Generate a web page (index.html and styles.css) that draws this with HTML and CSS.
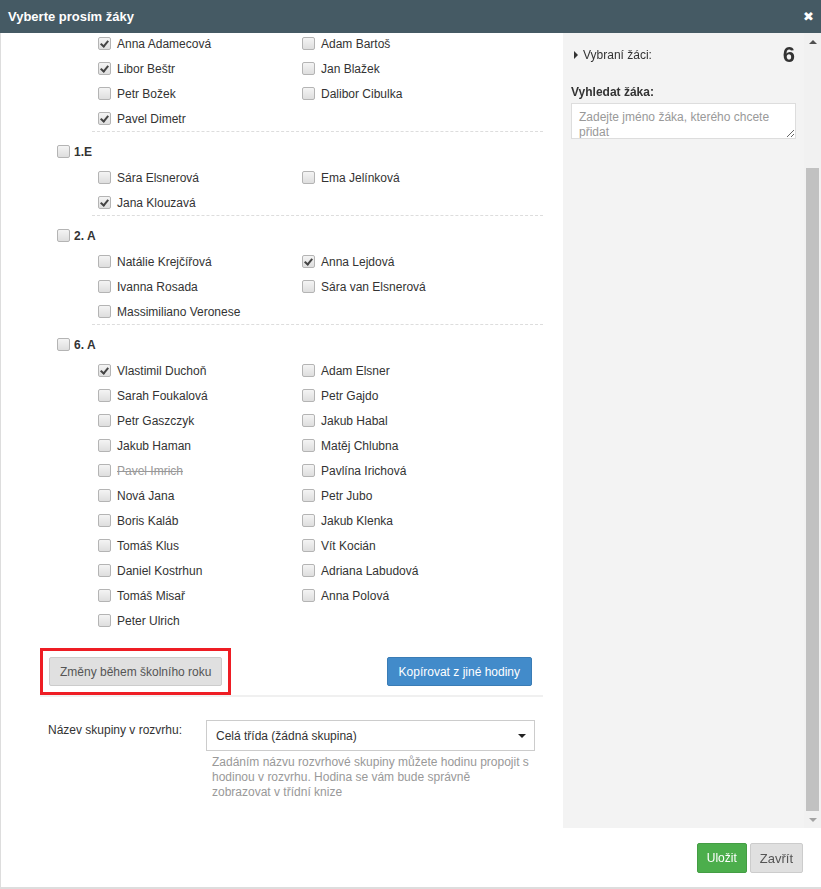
FILE: index.html
```html
<!DOCTYPE html>
<html lang="cs">
<head>
    <meta charset="UTF-8">
    <title>Vyberte prosím žáky</title>
    <link rel="stylesheet" href="styles.css">
</head>
<body>
<div class="dialog">
    <div class="dialog-header">
        <span class="title">Vyberte prosím žáky</span>
        <span class="close">&#10006;</span>
    </div>
    <div class="dialog-body">
        <div class="picker">
            <div class="groups">
                <div class="group">
                    <ul class="students">
                        <li><span class="cb checked"></span>Anna Adamecová</li>
                        <li><span class="cb"></span>Adam Bartoš</li>
                        <li><span class="cb checked"></span>Libor Beštr</li>
                        <li><span class="cb"></span>Jan Blažek</li>
                        <li><span class="cb"></span>Petr Božek</li>
                        <li><span class="cb"></span>Dalibor Cibulka</li>
                        <li><span class="cb checked"></span>Pavel Dimetr</li>
                    </ul>
                </div>
                <div class="group">
                    <div class="group-title"><span class="cb"></span>1.E</div>
                    <ul class="students">
                        <li><span class="cb"></span>Sára Elsnerová</li>
                        <li><span class="cb"></span>Ema Jelínková</li>
                        <li><span class="cb checked"></span>Jana Klouzavá</li>
                    </ul>
                </div>
                <div class="group">
                    <div class="group-title"><span class="cb"></span>2. A</div>
                    <ul class="students">
                        <li><span class="cb"></span>Natálie Krejčířová</li>
                        <li><span class="cb checked"></span>Anna Lejdová</li>
                        <li><span class="cb"></span>Ivanna Rosada</li>
                        <li><span class="cb"></span>Sára van Elsnerová</li>
                        <li><span class="cb"></span>Massimiliano Veronese</li>
                    </ul>
                </div>
                <div class="group last">
                    <div class="group-title"><span class="cb"></span>6. A</div>
                    <ul class="students">
                        <li><span class="cb checked"></span>Vlastimil Duchoň</li>
                        <li><span class="cb"></span>Adam Elsner</li>
                        <li><span class="cb"></span>Sarah Foukalová</li>
                        <li><span class="cb"></span>Petr Gajdo</li>
                        <li><span class="cb"></span>Petr Gaszczyk</li>
                        <li><span class="cb"></span>Jakub Habal</li>
                        <li><span class="cb"></span>Jakub Haman</li>
                        <li><span class="cb"></span>Matěj Chlubna</li>
                        <li class="left"><span class="cb"></span><s>Pavel Imrich</s></li>
                        <li><span class="cb"></span>Pavlína Irichová</li>
                        <li><span class="cb"></span>Nová Jana</li>
                        <li><span class="cb"></span>Petr Jubo</li>
                        <li><span class="cb"></span>Boris Kaláb</li>
                        <li><span class="cb"></span>Jakub Klenka</li>
                        <li><span class="cb"></span>Tomáš Klus</li>
                        <li><span class="cb"></span>Vít Kocián</li>
                        <li><span class="cb"></span>Daniel Kostrhun</li>
                        <li><span class="cb"></span>Adriana Labudová</li>
                        <li><span class="cb"></span>Tomáš Misař</li>
                        <li><span class="cb"></span>Anna Polová</li>
                        <li><span class="cb"></span>Peter Ulrich</li>
                    </ul>
                </div>
            </div>
            <div class="actions">
                <div class="highlight">
                    <button class="btn btn-default">Změny během školního roku</button>
                </div>
                <button class="btn btn-primary">Kopírovat z jiné hodiny</button>
            </div>
            <div class="form-row">
                <label class="form-label">Název skupiny v rozvrhu:</label>
                <div class="select">
                    <span>Celá třída (žádná skupina)</span>
                    <span class="caret"></span>
                </div>
                <p class="help">Zadáním názvu rozvrhové skupiny můžete hodinu propojit s hodinou v rozvrhu. Hodina se vám bude správně zobrazovat v třídní knize</p>
            </div>
        </div>
        <aside class="side">
            <div class="summary">
                <span class="toggle"><span class="arrow"></span>Vybraní žáci:</span>
                <span class="count">6</span>
            </div>
            <label class="side-label">Vyhledat žáka:</label>
            <div class="search">
                <textarea placeholder="Zadejte jméno žáka, kterého chcete přidat"></textarea>
            </div>
        </aside>
        <div class="scrollbar">
            <div class="sb-btn"><span class="sb-up"></span></div>
            <div class="sb-track"><div class="sb-thumb"></div></div>
            <div class="sb-btn"><span class="sb-down"></span></div>
        </div>
    </div>
    <div class="dialog-footer">
        <button class="btn btn-success">Uložit</button>
        <button class="btn btn-default">Zavřít</button>
    </div>
</div>
</body>
</html>
```

FILE: styles.css
```css
body {
    margin: 0;
    font-family: "Liberation Sans", Arial, sans-serif;
    font-size: 12px;
    color: #333;
    background: #fff;
}
.dialog {
    width: 821px;
    height: 889px;
    display: flex;
    flex-direction: column;
    overflow: hidden;
}
/* Header */
.dialog-header {
    height: 33px;
    flex: none;
    background: #455a64;
    color: #fff;
    display: flex;
    align-items: center;
    justify-content: space-between;
    padding: 0 7px 0 8px;
}
.title {
    font-weight: bold;
    font-size: 13px;
}
.close {
    font-family: "DejaVu Sans", sans-serif;
    font-size: 13px;
    font-weight: bold;
}
/* Body */
.dialog-body {
    height: 795px;
    flex: none;
    display: flex;
    border-left: 1px solid #ddd;
}
.picker {
    width: 562px;
    overflow: hidden;
}
.groups {
    margin-top: -2px;
    padding: 0 20px 0 56px;
}
.group-title {
    margin-top: 6px;
    height: 27px;
    display: flex;
    align-items: center;
    font-weight: bold;
}
.group-title .cb {
    margin-right: 4px;
}
.students {
    list-style: none;
    margin: 0 0 0 35px;
    padding: 0 0 0 6px;
    display: grid;
    grid-template-columns: 204px 1fr;
    border-bottom: 1px dashed #ddd;
}
.group.last .students {
    border-bottom: none;
}
.students li {
    height: 25px;
    display: flex;
    align-items: center;
}
.students li.left {
    color: #999;
}
.cb {
    width: 11px;
    height: 11px;
    border: 1px solid #b4b4b4;
    border-radius: 2px;
    background: linear-gradient(#f4f4f4, #dedede);
    margin-right: 6px;
    position: relative;
    flex: none;
}
.cb.checked::after {
    content: "";
    position: absolute;
    left: 3px;
    top: 1px;
    width: 3px;
    height: 6px;
    border: solid #444;
    border-width: 0 2px 2px 0;
    transform: rotate(40deg);
}
/* Actions */
.actions {
    margin: 15px 20px 0 39px;
    padding-right: 11px;
    display: flex;
    align-items: center;
    justify-content: space-between;
    border-bottom: 2px solid #f0f0f0;
}
.highlight {
    border: 3px solid #ee1d24;
    padding: 6px;
}
.btn {
    font-family: inherit;
    font-size: 12px;
    height: 29px;
    padding: 0 10px;
    border-radius: 2px;
    cursor: pointer;
}
.btn-default {
    background: #e0e0e0;
    border: 1px solid #ccc;
    color: #555;
}
.btn-primary {
    background: #428bca;
    border: 1px solid #3a7cb5;
    color: #fff;
    padding: 0 11px;
}
.btn-success {
    background: #4cae4c;
    border: 1px solid #449d44;
    color: #fff;
}
/* Group name */
.form-row {
    display: grid;
    grid-template-columns: 158px 329px;
    padding: 23px 0 0 47px;
}
.form-label {
    padding-top: 3px;
}
.select {
    height: 29px;
    border: 1px solid #ccc;
    display: flex;
    align-items: center;
    justify-content: space-between;
    padding: 0 8px 0 9px;
    font-size: 12px;
}
.caret {
    width: 0;
    height: 0;
    border-left: 4px solid transparent;
    border-right: 4px solid transparent;
    border-top: 4px solid #222;
}
.help {
    grid-column: 2;
    width: 318px;
    margin: 4px 0 0;
    padding-left: 6px;
    line-height: 15px;
    color: #999;
}
/* Selected panel */
.side {
    width: 241px;
    flex: none;
    background: #f3f3f3;
    padding: 10px 9px 0 8px;
    box-sizing: border-box;
}
.summary {
    height: 24px;
    display: flex;
    align-items: center;
    justify-content: space-between;
    padding-left: 3px;
}
.toggle {
    display: flex;
    align-items: center;
}
.arrow {
    width: 0;
    height: 0;
    border-top: 4px solid transparent;
    border-bottom: 4px solid transparent;
    border-left: 4px solid #333;
    margin-right: 5px;
}
.count {
    font-size: 22px;
    font-weight: bold;
}
.side-label {
    display: block;
    margin-top: 18px;
    line-height: 14px;
    font-weight: bold;
}
.search {
    margin-top: 4px;
    margin-right: -1px;
}
.search textarea {
    display: block;
    width: 100%;
    height: 36px;
    box-sizing: border-box;
    border: 1px solid #ddd;
    padding: 6px 7px 2px;
    font-family: inherit;
    font-size: 12px;
    line-height: 15px;
    resize: vertical;
}
.search textarea::placeholder {
    color: #999;
}
/* Scrollbar */
.scrollbar {
    width: 17px;
    flex: none;
    background: #f1f1f1;
    display: flex;
    flex-direction: column;
}
.sb-btn {
    height: 17px;
    display: flex;
    align-items: center;
    justify-content: center;
}
.sb-up {
    border-left: 4px solid transparent;
    border-right: 4px solid transparent;
    border-bottom: 4px solid #505050;
}
.sb-down {
    border-left: 4px solid transparent;
    border-right: 4px solid transparent;
    border-top: 4px solid #a3a3a3;
}
.sb-track {
    flex: 1;
    padding: 0 2px;
}
.sb-thumb {
    margin-top: 118px;
    height: 643px;
    background: #c1c1c1;
}
/* Footer */
.dialog-footer {
    flex: 1;
    display: flex;
    justify-content: flex-end;
    align-items: flex-start;
    gap: 3px;
    padding: 15px 18px 0 0;
    border-left: 1px solid #ddd;
    border-bottom: 2px solid #ddd;
}
.dialog-footer .btn {
    height: 30px;
    padding: 0 9px;
}
.dialog-footer .btn-default {
    font-size: 13px;
}
```
